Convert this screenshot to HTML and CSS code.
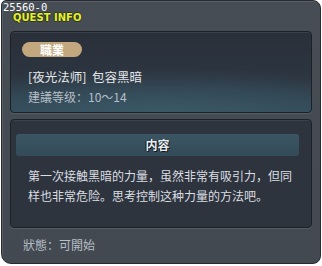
FILE: index.html
```html
<!DOCTYPE html>
<html lang="zh">
<head>
  <meta charset="UTF-8">
  <title>Quest Info</title>
  <link rel="stylesheet" href="styles.css">
</head>
<body>

<div class="window">
  <div class="head">
    <div class="quest-id">25560-0</div>
    <div class="title">QUEST INFO</div>
  </div>

  <!-- quest summary -->
  <div class="panel summary">
    <div class="badge">職業</div>
    <div class="quest-name">[夜光法师]&nbsp; 包容黑暗</div>
    <div class="quest-level">建議等级：10～14</div>
  </div>

  <!-- quest description -->
  <div class="panel content">
    <div class="bar">内容</div>
    <p class="desc">第一次接触黑暗的力量，虽然非常有吸引力，但同样也非常危险。思考控制这种力量的方法吧。</p>
  </div>

  <div class="status">狀態：可開始</div>
</div>

</body>
</html>
```

FILE: styles.css
```css
body {
  margin: 0;
  background: #ffffff;
  font-family: "Noto Sans CJK SC", "Noto Sans CJK TC", sans-serif;
}
.window {
  margin-left: 1px;
  width: 318px;
  height: 262px;
  background: linear-gradient(#474d55, #434950);
  border: 1px solid #272b31;
  border-radius: 5px 8px 8px 10px;
  box-shadow: inset 1px 1px 0 #585e66;
  display: flex;
  flex-direction: column;
}
.head {
  height: 30px;
}
.quest-id {
  font-family: "DejaVu Sans Mono", monospace;
  font-size: 10.5px;
  line-height: 10px;
  color: #ffffff;
  padding: 1px 0 0 1px;
}
.title {
  font-family: "DejaVu Sans", sans-serif;
  font-weight: bold;
  font-size: 10px;
  line-height: 10px;
  color: #e4f030;
  padding: 1px 0 0 11px;
  text-shadow: 1px 0 0 #30361c, -1px 0 0 #30361c, 0 1px 0 #30361c, 0 -1px 0 #30361c;
}
.panel {
  margin-left: 8px;
  width: 300px;
  border: 1px solid #1c2128;
  border-radius: 4px;
  box-shadow: 0 1px 0 #555b63, inset 0 1px 0 #3a414b;
}
.summary {
  height: 80px;
  background: radial-gradient(ellipse 90% 55% at 50% 100%, #3a5867, transparent),
              linear-gradient(#2a303a, #2c3540 60%, #324754);
}
.badge {
  margin: 10px 0 0 11px;
  width: 60px;
  height: 15px;
  border-radius: 8px;
  background: #c2a77f;
  color: #ffffff;
  font-size: 12px;
  font-weight: bold;
  line-height: 15px;
  text-align: center;
}
.quest-name {
  margin: 11px 0 0 17px;
  font-size: 12.5px;
  line-height: 18px;
  color: #e6e8ea;
}
.quest-level {
  margin: 3px 0 0 17px;
  font-size: 12px;
  line-height: 16px;
  color: #b6bec6;
}
.content {
  margin-top: 6px;
  height: 107px;
  background: #2e343d;
}
.bar {
  margin: 14px 0 0 5px;
  width: 283px;
  height: 22px;
  border-radius: 3px;
  background: linear-gradient(#3a5563, #344b59);
  color: #e8eef0;
  font-size: 12px;
  font-weight: bold;
  line-height: 22px;
  text-align: center;
  text-shadow: 1px 1px 0 #10161c, -1px 0 0 #10161c;
}
.desc {
  margin: 10px 0 0 17px;
  width: 270px;
  font-size: 12px;
  line-height: 20px;
  color: #dadee2;
}
.status {
  margin: 9px 0 0 21px;
  font-size: 12px;
  line-height: 16px;
  color: #b6bec6;
}
```
